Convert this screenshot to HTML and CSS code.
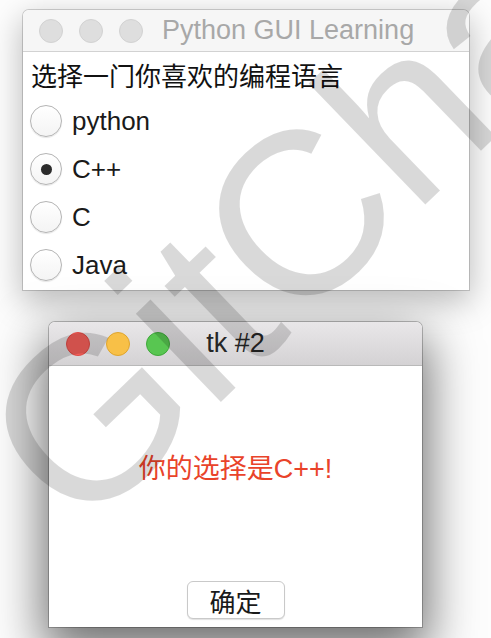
FILE: index.html
```html
<!DOCTYPE html>
<html lang="zh">
<head>
<meta charset="utf-8">
<title>Python GUI Learning</title>
<link rel="stylesheet" href="styles.css">
</head>
<body>
<div class="desk">
  <div class="win win1">
    <div class="titlebar inactive">
      <span class="light"></span>
      <span class="light"></span>
      <span class="light"></span>
      <span class="title">Python GUI Learning</span>
    </div>
    <div class="content1">
      <div class="prompt">选择一门你喜欢的编程语言</div>
      <div class="row"><span class="radio"></span><span class="opt">python</span></div>
      <div class="row"><span class="radio checked"></span><span class="opt">C++</span></div>
      <div class="row"><span class="radio"></span><span class="opt">C</span></div>
      <div class="row"><span class="radio"></span><span class="opt">Java</span></div>
    </div>
  </div>

  <div class="win win2">
    <div class="titlebar active">
      <div class="lights">
        <span class="light red"></span>
        <span class="light yellow"></span>
        <span class="light green"></span>
      </div>
      <span class="title center">tk #2</span>
    </div>
    <div class="content2">
      <div class="msg">你的选择是C++!</div>
      <div class="btn">确定</div>
    </div>
  </div>
</div>
<svg class="watermark" width="491" height="638" viewBox="0 0 491 638" aria-hidden="true">
  <text x="80" y="538" transform="rotate(-44 80 538)" class="wm-text">GitChat</text>
</svg>
</body>
</html>
```

FILE: styles.css
```css
html, body {
  margin: 0;
  padding: 0;
}
body {
  width: 491px;
  height: 638px;
  overflow: hidden;
  background: #fdfdfd;
  font-family: "Liberation Sans", "Noto Sans CJK SC", sans-serif;
  color: #1e1e1e;
  position: relative;
}
.desk {
  padding-top: 10px;
}
.win {
  background: #fff;
  border-radius: 6px 6px 0 0;
  overflow: hidden;
}
.win1 {
  margin-left: 23px;
  width: 446px;
  height: 280px;
  box-shadow: 0 0 0 1px rgba(0,0,0,0.17), 0 10px 32px 2px rgba(0,0,0,0.26);
}
.win2 {
  margin-left: 49px;
  margin-top: 32px;
  width: 373px;
  height: 305px;
  box-shadow: 0 0 0 1px rgba(0,0,0,0.24), 0 20px 50px 6px rgba(0,0,0,0.56);
}
.titlebar {
  box-sizing: border-box;
  display: flex;
  align-items: center;
  border-bottom: 1px solid #d2d2d2;
}
.titlebar.inactive {
  height: 42px;
  padding-left: 16px;
  background: #f6f6f6;
}
.titlebar.active {
  height: 44px;
  background: linear-gradient(#e9e7e9, #d4d2d4);
  border-bottom-color: #b9b9b9;
  display: grid;
  align-items: center;
}
.titlebar.active > * {
  grid-area: 1 / 1;
}
.lights {
  display: flex;
  padding-left: 17px;
  gap: 16px;
}
.inactive .light + .light {
  margin-left: 16px;
}
.light {
  box-sizing: border-box;
  width: 24px;
  height: 24px;
  border-radius: 50%;
  background: #dedede;
  border: 1px solid #d2d2d2;
  flex: none;
}
.light.red { background: #f5605a; border-color: #dd4a45; }
.light.yellow { background: #f8c047; border-color: #dfa52e; }
.light.green { background: #58c651; border-color: #3fa83a; }
.title {
  font-size: 27px;
  white-space: nowrap;
}
.inactive .title {
  margin-left: 19px;
  color: #a8a8a8;
}
.title.center {
  justify-self: center;
  color: #262626;
}
.content1 {
  display: flex;
  flex-direction: column;
}
.prompt {
  height: 45px;
  line-height: 45px;
  padding-left: 8px;
  font-family: "Noto Sans CJK SC", sans-serif;
  font-size: 26px;
  color: #111;
}
.row {
  height: 48px;
  display: flex;
  align-items: center;
  padding-left: 7px;
}
.radio {
  box-sizing: border-box;
  width: 32px;
  height: 32px;
  border-radius: 50%;
  border: 1px solid #b4b4b4;
  background: linear-gradient(#ffffff, #f4f4f4);
  box-shadow: 0 1px 1px rgba(0,0,0,0.10);
  display: flex;
  align-items: center;
  justify-content: center;
  flex: none;
}
.radio.checked::after {
  content: "";
  width: 11px;
  height: 11px;
  border-radius: 50%;
  background: #2b2b2b;
}
.opt {
  margin-left: 10px;
  font-size: 26px;
  color: #1a1a1a;
}
.content2 {
  height: 261px;
  display: flex;
  flex-direction: column;
  align-items: center;
}
.msg {
  margin-top: 87px;
  line-height: 32px;
  font-size: 27px;
  color: #e9432a;
  font-family: "Liberation Sans", "Noto Sans CJK SC", sans-serif;
}
.btn {
  margin-top: auto;
  margin-bottom: 8px;
  box-sizing: border-box;
  width: 98px;
  height: 38px;
  border: 1px solid #c9c9c9;
  border-radius: 6px;
  background: #fff;
  box-shadow: 0 1px 1px rgba(0,0,0,0.12);
  display: flex;
  align-items: center;
  justify-content: center;
  font-family: "Noto Sans CJK SC", sans-serif;
  font-size: 26px;
  color: #1a1a1a;
}
.watermark {
  position: absolute;
  left: 0;
  top: 0;
  pointer-events: none;
}
.wm-text {
  font-family: "Liberation Sans", sans-serif;
  font-size: 232px;
  fill: rgba(0,0,0,0.15);
}
```
